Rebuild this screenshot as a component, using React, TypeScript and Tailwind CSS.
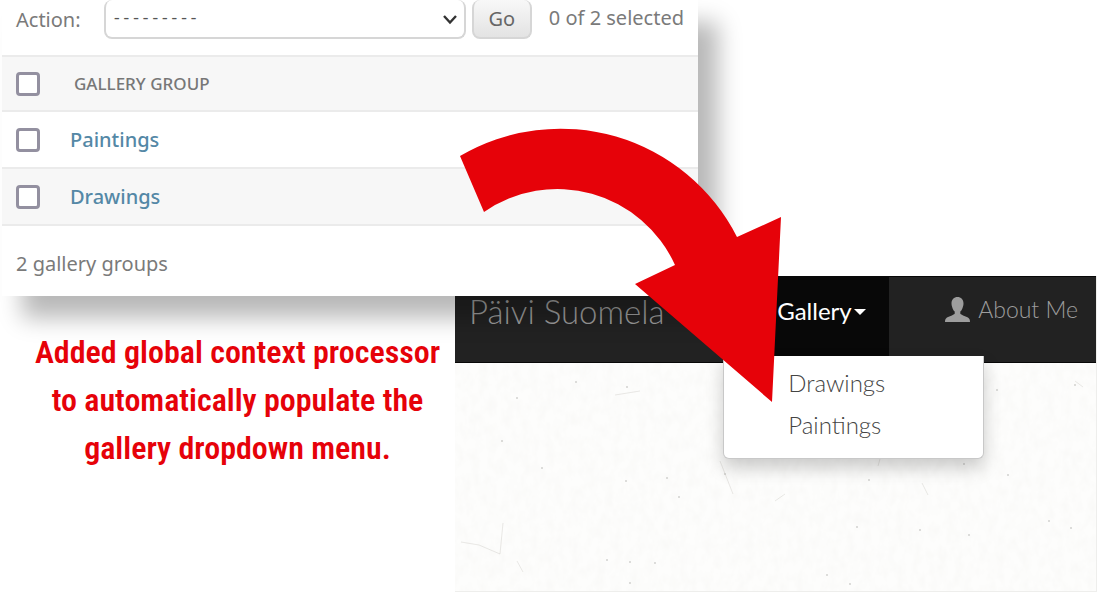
import { useState } from 'react';

const groups = ['Paintings', 'Drawings'];
const menu = ['Drawings', 'Paintings'];

const specks: [number, number, number][] = [
  [121, 19, 1], [62, 35, 1], [172, 24, 1], [47, 78, 1], [87, 105, 1], [171, 118, 1], [212, 115, 1],
  [200, 200, 1], [270, 111, 1], [152, 197, 1], [175, 220, 1], [175, 199, 1], [372, 212, 1], [395, 221, 1],
  [414, 117, 1], [402, 164, 1], [553, 112, 1], [616, 165, 1], [594, 158, 1], [514, 172, 1],
  [542, 27, 1], [509, 101, 1], [620, 22, 1], [224, 134, 1], [465, 167, 1],
];

function Checkbox({ label }: { label: string }) {
  const [on, setOn] = useState(false);
  return (
    <input
      type="checkbox"
      aria-label={label}
      checked={on}
      onChange={() => setOn(!on)}
      className="block size-6 appearance-none rounded-sm border-3 border-[#9390a0] bg-white checked:bg-[#417690]"
    />
  );
}

function AdminPanel() {
  return (
    <section className="z-10 col-start-1 col-end-3 row-start-1 row-end-3 ml-0.5 self-start bg-white font-['Noto_Sans','Open_Sans',sans-serif] text-[#7a7a7a] shadow-[20px_22px_22px_rgba(0,0,0,0.28)]">
      <form className="flex h-[55px] items-start pl-3.5 text-[20px] leading-9" onSubmit={(e) => e.preventDefault()}>
        <label htmlFor="action" className="w-22 pt-0.5">
          Action:
        </label>
        <div className="relative mr-1.5 min-w-0 flex-1">
          <select
            id="action"
            className="block h-[39px] w-full appearance-none rounded-lg border-2 border-t-0 border-[#d6d6d6] bg-white pl-1.5 font-['Liberation_Mono',monospace] text-[16px] text-[#555]"
          >
            <option>---------</option>
          </select>
          <svg className="pointer-events-none absolute top-3 right-2 h-4 w-4" viewBox="0 0 16 16" fill="none" stroke="#333" strokeWidth="2.4">
            <path d="M2 4 8 10.5 14 4" />
          </svg>
        </div>
        <button
          type="submit"
          className="h-[39px] w-[60px] rounded-lg border-2 border-t-0 border-[#d6d6d6] bg-linear-to-b from-[#f8f8f8] to-[#e3e3e3] text-[#666]"
        >
          Go
        </button>
        <span className="pr-3.5 pl-[17px] whitespace-nowrap">0 of 2 selected</span>
      </form>
      <table className="w-full border-collapse text-left">
        <thead>
          <tr className="h-[55px] border-y-2 border-[#ebebeb] bg-[#f7f7f7]">
            <th className="w-[68px] py-0 pl-3.5">
              <Checkbox label="Select all" />
            </th>
            <th className="py-0 pl-1 text-[17px] font-medium text-[#777]">GALLERY GROUP</th>
          </tr>
        </thead>
        <tbody>
          {groups.map((g) => (
            <tr key={g} className="h-[57px] border-b-2 border-[#ebebeb] even:bg-[#f7f7f7]">
              <td className="pl-3.5">
                <Checkbox label={g} />
              </td>
              <td>
                <a href="#" className="text-[20px] font-medium text-[#5488a6]">
                  {g}
                </a>
              </td>
            </tr>
          ))}
        </tbody>
      </table>
      <p className="pt-5 pb-3.5 pl-3.5 text-[20px] leading-9">2 gallery groups</p>
    </section>
  );
}

function Paper() {
  return (
    <svg className="absolute inset-0 h-full w-full" aria-hidden="true">
      <filter id="grain">
        <feTurbulence type="fractalNoise" baseFrequency="0.12 0.08" numOctaves="3" seed="4" />
        <feColorMatrix values="0 0 0 0 0.5  0 0 0 0 0.48  0 0 0 0 0.42  0.1 0 0 0 -0.035" />
      </filter>
      <rect width="100%" height="100%" filter="url(#grain)" />
      <g fill="#a8a8a4" opacity="0.5">
        {specks.map(([x, y, r]) => (
          <circle key={`${x}-${y}`} cx={x} cy={y} r={r} />
        ))}
      </g>
      <g fill="none" stroke="#b9b7ae" opacity="0.3">
        <path d="M6 179 24 182 45 191 48 160" />
        <path d="M62 198 68 209M265 98 278 131M467 120 473 132M160 32 185 28" />
        <path d="M320 138 330 131M425 96 423 103M620 18 628 24" />
      </g>
    </svg>
  );
}

function SitePreview() {
  return (
    <section className="col-start-2 col-end-4 row-start-2 row-end-4 flex flex-col border-r border-b border-[#eeeeec] bg-[#fdfdfc] font-['Lato',sans-serif]">
      <nav className="relative z-[1] flex h-[87px] items-start border-y border-[#080808] bg-[#222]">
        <a href="#" className="min-w-0 flex-1 pt-2.5 pl-3.5 text-[33px] leading-12 font-light whitespace-nowrap text-[#9d9d9d]">
          Päivi Suomela
        </a>
        <div className="relative w-[166px]">
          <button type="button" className="flex h-[79px] w-full items-start bg-[#080808] pt-4 pl-[54px] text-[24px] leading-9 text-white">
            Gallery
            <svg className="mt-4 ml-0.5 h-[6px] w-3" viewBox="0 0 12 6" fill="currentColor">
              <path d="M0 0h12L6 6z" />
            </svg>
          </button>
          <ul className="absolute top-full left-0 w-[261px] rounded-b-md border border-t-0 border-[#c8c8c8] bg-white pt-1.5 pb-3 text-[24px] leading-[42px] font-light text-[#444] shadow-[0_9px_18px_rgba(0,0,0,0.2)]">
            {menu.map((m) => (
              <li key={m}>
                <a href="#" className="block pl-16">
                  {m}
                </a>
              </li>
            ))}
          </ul>
        </div>
        <a href="#" className="flex items-start pt-3.5 pr-[18px] pl-14 text-[23px] leading-9 font-light whitespace-nowrap text-[#9d9d9d]">
          <svg className="mt-1.5 mr-2 h-[25px] w-[25px]" viewBox="0 0 25 25" fill="currentColor">
            <path d="M12.500 0C9 0 6.500 2.400 6.500 6.500c0 1.200.2 2.200.6 3.200.5 1.900 1.300 3.800 2.600 4.900v2.200C8.400 18.300 3 19.700 1.200 21.200.3 22 0 23 0 25h25c0-2-.3-3-1.200-3.800C22 19.700 16.600 18.300 15.300 16.800v-2.200c1.300-1.100 2.100-3 2.600-4.900.4-1 .6-2 .6-3.200 0-4.100-2.500-6.500-6-6.500z" />
          </svg>
          About Me
        </a>
      </nav>
      <div className="relative min-h-[228px] flex-1">
        <Paper />
      </div>
    </section>
  );
}

export default function App() {
  return (
    <main className="relative grid grid-cols-[455fr_243fr_399fr_6fr] grid-rows-[276px_20px_296px] overflow-x-clip bg-white pb-2">
      <AdminPanel />
      <SitePreview />
      <p className="z-10 col-start-1 row-start-3 pt-8 pl-5 text-center font-['Roboto_Condensed','Liberation_Sans_Narrow',sans-serif] text-[32px] leading-[48px] font-semibold whitespace-nowrap text-[#e60209]">
        Added global context processor
        <br />
        to automatically populate the
        <br />
        gallery dropdown menu.
      </p>
      <svg className="pointer-events-none absolute top-[127px] left-[460px] z-20 h-[276px] w-[322px]" viewBox="460 127 322 276" fill="#e60209" aria-hidden="true">
        <path d="M460 156A198 198 0 0 1 737 237L781 217 772 402 635 284 675 265A129 129 0 0 0 484 212Z" />
      </svg>
    </main>
  );
}
